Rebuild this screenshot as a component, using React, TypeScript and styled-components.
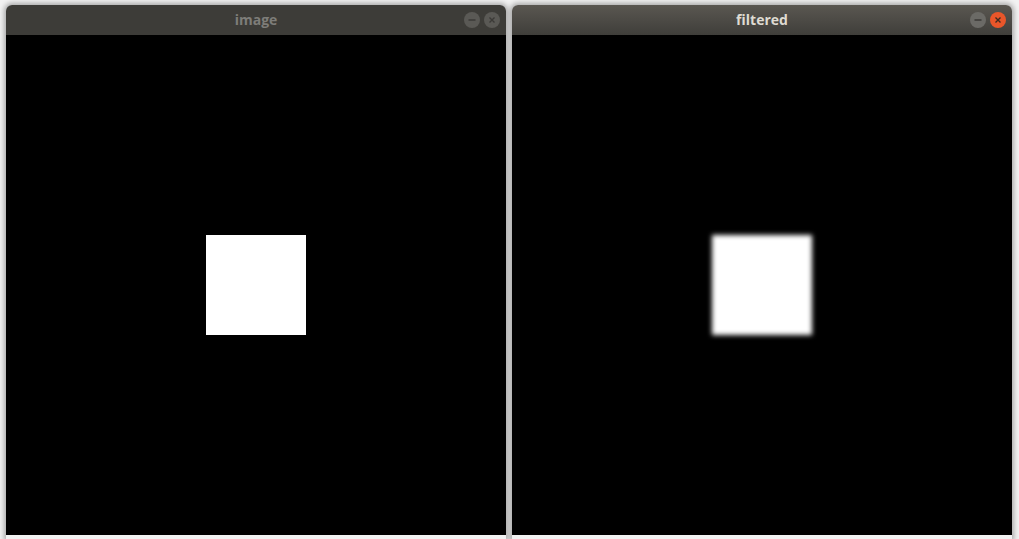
import React from "react";
import styled, { createGlobalStyle } from "styled-components";

const GlobalStyle = createGlobalStyle`
  html, body {
    margin: 0;
    padding: 0;
    background: #f2f2f2;
    overflow: hidden;
  }
`;

const Desktop = styled.div`
  width: 1019px;
  height: 539px;
  display: flex;
  gap: 6px;
  padding: 5px 0 0 6px;
  box-sizing: border-box;
  background: #f2f2f2;
`;

const Window = styled.div`
  width: 500px;
  display: flex;
  flex-direction: column;
  border-radius: 6px 6px 0 0;
  overflow: hidden;
  box-shadow: 0 0 5px 2px rgba(0, 0, 0, 0.3);
`;

const TitleBar = styled.div<{ $active?: boolean }>`
  position: relative;
  height: 30px;
  display: flex;
  align-items: center;
  justify-content: center;
  padding-bottom: 1px;
  box-sizing: border-box;
  background: ${({ $active }) =>
    $active ? "linear-gradient(#5a5751, #3f3e3a)" : "#3d3c38"};
  font-family: "Open Sans", "DejaVu Sans", sans-serif;
  font-weight: 700;
  font-size: 14px;
  color: ${({ $active }) => ($active ? "#dfdbd2" : "#7e7d79")};
`;

const Controls = styled.div`
  position: absolute;
  right: 6px;
  top: 7px;
  display: flex;
  gap: 4px;
`;

const Circle = styled.div<{ $bg: string }>`
  width: 16px;
  height: 16px;
  border-radius: 50%;
  background: ${({ $bg }) => $bg};
  display: flex;
  align-items: center;
  justify-content: center;
`;

const Canvas = styled.div`
  height: 500px;
  background: #000;
  display: flex;
  align-items: center;
  justify-content: center;
`;

const Square = styled.div<{ $blur?: boolean }>`
  width: 100px;
  height: 100px;
  background: #fff;
  filter: ${({ $blur }) => ($blur ? "blur(2.5px)" : "none")};
`;

function MinIcon({ color }: { color: string }) {
  return (
    <svg width="12" height="12" viewBox="0 0 12 12">
      <line x1="2.5" y1="6" x2="9.5" y2="6" stroke={color} strokeWidth="1.5" />
    </svg>
  );
}

function CloseIcon({ color }: { color: string }) {
  return (
    <svg width="12" height="12" viewBox="0 0 12 12">
      <path d="M3.5 3.5 L8.5 8.5 M8.5 3.5 L3.5 8.5" stroke={color} strokeWidth="1.4" />
    </svg>
  );
}

function ImageWindow({
  title,
  active,
  blurred
}: {
  title: string;
  active?: boolean;
  blurred?: boolean;
}) {
  return (
    <Window>
      <TitleBar $active={active}>
        {title}
        <Controls>
          <Circle $bg={active ? "#6b6a66" : "#5a5955"}>
            <MinIcon color={active ? "#3a3936" : "#3b3a37"} />
          </Circle>
          <Circle $bg={active ? "#e9562a" : "#5a5955"}>
            <CloseIcon color={active ? "#3d2a20" : "#3b3a37"} />
          </Circle>
        </Controls>
      </TitleBar>
      <Canvas>
        <Square $blur={blurred} />
      </Canvas>
    </Window>
  );
}

export default function App() {
  return (
    <>
      <GlobalStyle />
      <Desktop>
        <ImageWindow title="image" />
        <ImageWindow title="filtered" active blurred />
      </Desktop>
    </>
  );
}
